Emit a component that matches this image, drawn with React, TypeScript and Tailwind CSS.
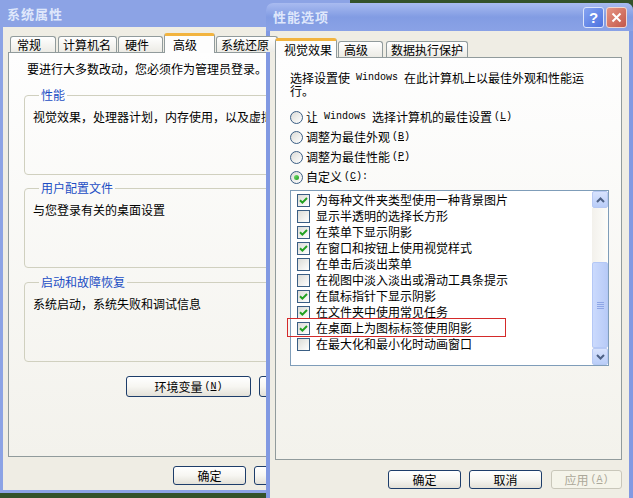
import React from "react";

// ─── Shared styles ────────────────────────────────────────────────────────────

const FONT = "font-['Noto_Sans_CJK_SC','Liberation_Sans',sans-serif]";
const MONO = "font-['Liberation_Mono','Noto_Sans_CJK_SC',monospace] text-[10px] leading-none whitespace-pre";

function Key({ k }: { k: string }) {
  return (
    <span className={`${MONO} ml-[2px]`}>
      (<span className="underline">{k}</span>)
    </span>
  );
}

function XpButton({
  children,
  className = "",
  disabled = false,
}: {
  children: React.ReactNode;
  className?: string;
  disabled?: boolean;
}) {
  return (
    <div
      className={`flex shrink-0 items-center justify-center rounded-[3px] border text-[12px] leading-none ${
        disabled
          ? "border-[#c9c7ba] bg-[#f5f4ea] text-[#aca899]"
          : "border-[#1d3d6a] bg-linear-to-b from-[#ffffff] via-[#f7f6f2] to-[#e3e1d8] text-black"
      } ${className}`}
    >
      {children}
    </div>
  );
}

function Tab({
  label,
  active = false,
  className = "",
}: {
  label: string;
  active?: boolean;
  className?: string;
}) {
  if (active) {
    return (
      <div
        className={`flex h-[20px] shrink-0 items-center rounded-t-[3px] border-x border-t-[3px] border-x-[#919b9c] border-t-[#f2b43f] bg-[#fdfdfd] text-[12px] leading-none text-black ${className}`}
      >
        {label}
      </div>
    );
  }
  return (
    <div
      className={`mb-[1px] flex h-[16px] shrink-0 items-center rounded-t-[3px] border-x border-t border-[#919b9c] bg-linear-to-b from-[#ffffff] to-[#ecebe5] text-[12px] leading-none text-black ${className}`}
    >
      {label}
    </div>
  );
}

function Group({ title, text, className = "" }: { title: string; text: string; className?: string }) {
  return (
    <fieldset className={`h-[87px] w-[320px] rounded-[4px] border border-[#d0d0bf] pl-[8px] ${className}`}>
      <legend className="ml-[6px] px-[2px] text-[12px] leading-[14px] text-[#1c4ec4]">{title}</legend>
      <p className="mt-[8px] whitespace-nowrap text-[12px] leading-[14px] text-black">{text}</p>
    </fieldset>
  );
}

function CheckBox({ checked }: { checked: boolean }) {
  return (
    <span className="flex h-[13px] w-[13px] shrink-0 items-center justify-center border border-[#3a5e84] bg-linear-to-br from-[#dcdcd7] to-[#ffffff]">
      {checked && (
        <svg width="11" height="11" viewBox="0 0 11 11">
          <path d="M2 5.2 L4.4 7.6 L9 3" fill="none" stroke="#21a121" strokeWidth="2" />
        </svg>
      )}
    </span>
  );
}

function Radio({ checked = false }: { checked?: boolean }) {
  return (
    <span className="flex h-[13px] w-[13px] shrink-0 items-center justify-center rounded-full border border-[#3a5e84] bg-linear-to-br from-[#dcdcd7] to-[#ffffff]">
      {checked && <span className="h-[5px] w-[5px] rounded-full bg-linear-to-br from-[#6ee06a] to-[#1f9a1f]" />}
    </span>
  );
}

function ScrollButton({ up }: { up: boolean }) {
  return (
    <div className="flex h-[17px] w-[16px] items-center justify-center rounded-[2px] border border-[#b7c9f3] bg-linear-to-b from-[#d8e3fd] to-[#b9cdf8]">
      <svg width="9" height="6" viewBox="0 0 9 6">
        <path
          d={up ? "M1 5 L4.5 1.5 L8 5" : "M1 1 L4.5 4.5 L8 1"}
          fill="none"
          stroke="#4d6185"
          strokeWidth="2"
        />
      </svg>
    </div>
  );
}

function RadioRow({ checked = false, children }: { checked?: boolean; children: React.ReactNode }) {
  return (
    <label className="flex h-[20px] items-center gap-[3px] text-[12px] leading-none">
      <Radio checked={checked} />
      <span className="flex items-center">{children}</span>
    </label>
  );
}

// ─── Data ─────────────────────────────────────────────────────────────────────

const effects: { label: string; checked: boolean }[] = [
  { label: "为每种文件夹类型使用一种背景图片", checked: true },
  { label: "显示半透明的选择长方形", checked: false },
  { label: "在菜单下显示阴影", checked: true },
  { label: "在窗口和按钮上使用视觉样式", checked: true },
  { label: "在单击后淡出菜单", checked: false },
  { label: "在视图中淡入淡出或滑动工具条提示", checked: false },
  { label: "在鼠标指针下显示阴影", checked: true },
  { label: "在文件夹中使用常见任务", checked: true },
  { label: "在桌面上为图标标签使用阴影", checked: true },
  { label: "在最大化和最小化时动画窗口", checked: false },
];

// ─── App ──────────────────────────────────────────────────────────────────────

export default function App() {
  return (
    <div className={`relative h-[498px] w-[633px] overflow-hidden bg-[#34522a] ${FONT}`}>
      {/* ── 系统属性 (background window) ── */}
      <div className="absolute left-0 top-0 flex h-[493px] w-[350px] flex-col bg-[#8ca3e5] px-[3px] pb-[3px]">
        <div className="flex h-[27px] items-center pl-[4px] text-[13px] font-bold tracking-[1px] text-[#dfe7fb]">
          系统属性
        </div>
        <div className="flex flex-1 flex-col bg-[#efede4] px-[5px] pt-[6px]">
          <div className="relative z-10 flex h-[20px] items-end gap-[1px] pl-[2px]">
            <Tab label="常规" className="w-[46px] pl-[6px]" />
            <Tab label="计算机名" className="ml-[1px] w-[59px] pl-[4px]" />
            <Tab label="硬件" className="w-[45px] pl-[6px]" />
            <Tab label="高级" active className="w-[51px] pl-[8px]" />
            <Tab label="系统还原" className="w-[62px] pl-[4px]" />
          </div>
          <div className="-mt-[1px] flex h-[405px] flex-col border border-[#919b9c] bg-linear-to-b from-[#fefefe] to-[#f3f2ec] pl-[15px] pt-[9px]">
            <p className="ml-[3px] whitespace-nowrap text-[12px] leading-[14px] text-black">
              要进行大多数改动，您必须作为管理员登录。
            </p>
            <Group title="性能" text="视觉效果，处理器计划，内存使用，以及虚拟内存" className="mt-[12px]" />
            <Group title="用户配置文件" text="与您登录有关的桌面设置" className="mt-[6px]" />
            <Group title="启动和故障恢复" text="系统启动，系统失败和调试信息" className="mt-[7px]" />
            <div className="mt-[14px] flex gap-[8px] pl-[102px]">
              <XpButton className="h-[21px] w-[125px]">
                环境变量<Key k="N" />
              </XpButton>
              <XpButton className="h-[21px] w-[125px]">
                错误报告<Key k="R" />
              </XpButton>
            </div>
          </div>
          <div className="mt-[9px] flex gap-[8px] pl-[165px]">
            <XpButton className="h-[19px] w-[73px]">确定</XpButton>
            <XpButton className="h-[19px] w-[73px]">取消</XpButton>
          </div>
        </div>
      </div>

      {/* ── 性能选项 (front window) ── */}
      <div className="absolute left-[266px] top-[3px] flex h-[497px] w-[367px] flex-col rounded-t-[7px] bg-[#8199e2]">
        <div className="flex h-[28px] items-center justify-between rounded-t-[7px] bg-linear-to-b from-[#a9bbf0] via-[#829ce3] to-[#8aa2e6] pl-[7px] pr-[6px]">
          <span className="text-[13px] font-bold tracking-[1px] text-[#dfe7fb]">性能选项</span>
          <div className="flex gap-[2px]">
            <div className="flex h-[21px] w-[21px] items-center justify-center rounded-[3px] border border-[#dce5fb] bg-linear-to-br from-[#86a4f2] to-[#4d71de] font-['Liberation_Sans',sans-serif] text-[15px] font-bold leading-none text-white">
              ?
            </div>
            <div className="flex h-[21px] w-[21px] items-center justify-center rounded-[3px] border border-[#f0d6d0] bg-linear-to-br from-[#e69584] to-[#c2574a]">
              <svg width="11" height="11" viewBox="0 0 11 11">
                <path d="M1.5 1.5 L9.5 9.5 M9.5 1.5 L1.5 9.5" stroke="#ffffff" strokeWidth="2" />
              </svg>
            </div>
          </div>
        </div>
        <div className="mx-[4px] flex flex-1 flex-col bg-[#efede4] pl-[5px] pt-[7px]">
          <div className="relative z-10 flex h-[20px] items-end">
            <Tab label="视觉效果" active className="w-[62px] pl-[8px]" />
            <Tab label="高级" className="ml-[1px] w-[45px] pl-[5px]" />
            <Tab label="数据执行保护" className="ml-[3px] w-[82px] pl-[4px]" />
          </div>
          <div className="-mt-[1px] flex h-[403px] w-[347px] flex-col border border-[#919b9c] bg-linear-to-b from-[#fefefe] to-[#f3f2ec] pl-[14px] pt-[13px]">
            <div className="flex h-[13px] items-center whitespace-nowrap text-[12px] leading-none text-black">
              选择设置使<span className={MONO}> Windows </span>在此计算机上以最佳外观和性能运
            </div>
            <div className="flex h-[13px] items-center text-[12px] leading-none text-black">行。</div>
            <div className="mt-[10px] flex flex-col">
              <RadioRow>
                让<span className={MONO}> Windows </span>选择计算机的最佳设置<Key k="L" />
              </RadioRow>
              <RadioRow>
                调整为最佳外观<Key k="B" />
              </RadioRow>
              <RadioRow>
                调整为最佳性能<Key k="P" />
              </RadioRow>
              <RadioRow checked>
                自定义<Key k="C" />
                <span className={MONO}>:</span>
              </RadioRow>
            </div>

            {/* effects list */}
            <div className="mt-[3px] flex h-[176px] w-[319px] border border-[#7f9db9] bg-white">
              <div className="flex flex-1 flex-col pl-[6px] pt-[1px]">
                {effects.map((e) => (
                  <div key={e.label} className="flex h-[16px] items-center gap-[6px] text-[12px] leading-none text-black">
                    <CheckBox checked={e.checked} />
                    <span className="whitespace-nowrap">{e.label}</span>
                  </div>
                ))}
              </div>
              <div className="flex w-[16px] flex-col">
                <ScrollButton up />
                <div className="flex flex-1 flex-col bg-linear-to-r from-[#f3f1ec] to-[#fdfdfa]">
                  <div className="h-[54px]" />
                  <div className="flex h-[86px] flex-col items-center justify-center gap-[1px] rounded-[2px] border border-[#b4c8f6] bg-linear-to-r from-[#cbdafd] to-[#b8cbf7]">
                    <span className="h-[1px] w-[7px] bg-[#8ea6e6]" />
                    <span className="h-[1px] w-[7px] bg-[#8ea6e6]" />
                    <span className="h-[1px] w-[7px] bg-[#8ea6e6]" />
                    <span className="h-[1px] w-[7px] bg-[#8ea6e6]" />
                  </div>
                </div>
                <ScrollButton up={false} />
              </div>
            </div>
          </div>
          <div className="mt-[10px] flex pl-[113px]">
            <XpButton className="h-[19px] w-[73px]">确定</XpButton>
            <XpButton className="ml-[8px] h-[19px] w-[73px]">取消</XpButton>
            <XpButton disabled className="ml-[9px] h-[19px] w-[71px]">
              应用<Key k="A" />
            </XpButton>
          </div>
        </div>
      </div>

      {/* annotation box */}
      <div className="absolute left-[287px] top-[318px] h-[19px] w-[219px] border border-[#d42a2a]" />
    </div>
  );
}
